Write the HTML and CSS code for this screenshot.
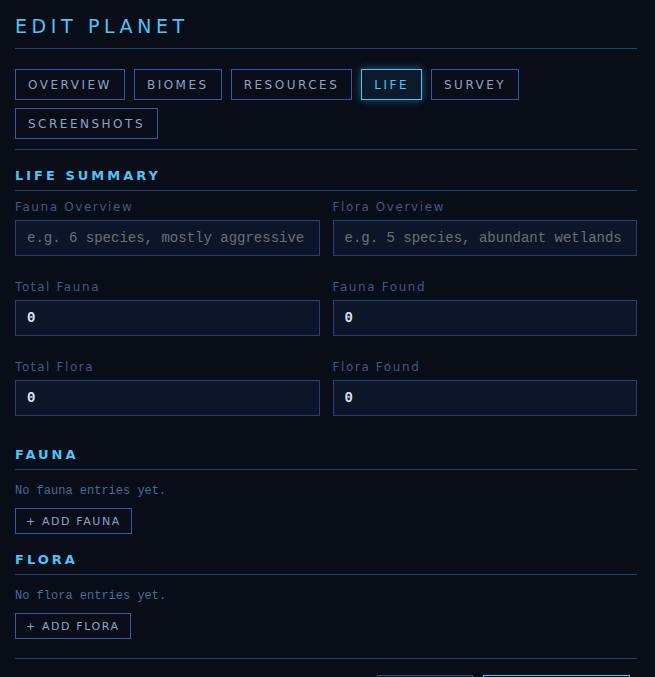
FILE: index.html
```html
<!DOCTYPE html>
<html lang="en">
<head>
    <meta charset="UTF-8">
    <meta name="viewport" content="width=device-width, initial-scale=1.0">
    <title>Edit Planet</title>
    <link rel="stylesheet" href="styles.css">
</head>
<body>

    <div class="panel">
        <h1 class="panel-title">EDIT PLANET</h1>

        <div class="tabs">
            <button class="tab">OVERVIEW</button>
            <button class="tab">BIOMES</button>
            <button class="tab">RESOURCES</button>
            <button class="tab active">LIFE</button>
            <button class="tab">SURVEY</button>
            <button class="tab">SCREENSHOTS</button>
        </div>

        <h2 class="section-title first">LIFE SUMMARY</h2>
        <div class="form-grid">
            <div class="field">
                <label>Fauna Overview</label>
                <input type="text" placeholder="e.g. 6 species, mostly aggressive">
            </div>
            <div class="field">
                <label>Flora Overview</label>
                <input type="text" placeholder="e.g. 5 species, abundant wetlands">
            </div>
            <div class="field">
                <label>Total Fauna</label>
                <input type="text" value="0">
            </div>
            <div class="field">
                <label>Fauna Found</label>
                <input type="text" value="0">
            </div>
            <div class="field">
                <label>Total Flora</label>
                <input type="text" value="0">
            </div>
            <div class="field">
                <label>Flora Found</label>
                <input type="text" value="0">
            </div>
        </div>

        <h2 class="section-title">FAUNA</h2>
        <p class="empty">No fauna entries yet.</p>
        <button class="add-button">+ ADD FAUNA</button>

        <h2 class="section-title small-gap">FLORA</h2>
        <p class="empty">No flora entries yet.</p>
        <button class="add-button">+ ADD FLORA</button>

        <div class="footer">
            <button class="footer-button">CANCEL</button>
            <button class="footer-button primary">SAVE CHANGES</button>
        </div>
    </div>

</body>
</html>
```

FILE: styles.css
```css
body {
    margin: 0;
    padding: 0;
    background-color: #080d18;
    font-family: 'DejaVu Sans', sans-serif;
    overflow: hidden;
}

.panel {
    padding: 14px 18px 0 15px;
}

.panel-title {
    margin: 0;
    font-size: 19px;
    line-height: 24px;
    font-weight: normal;
    letter-spacing: 4.6px;
    color: #4fc3f7;
    padding-bottom: 10px;
    border-bottom: 1px solid #263f6e;
}

.tabs {
    display: flex;
    flex-wrap: wrap;
    gap: 8px 9px;
    margin-top: 20px;
    padding-bottom: 10px;
    border-bottom: 1px solid #263f6e;
}

.tab {
    height: 31px;
    padding: 0 12px;
    background-color: #080d18;
    border: 1px solid #2f5aa8;
    color: #8aa4c8;
    font-family: 'DejaVu Sans', sans-serif;
    font-size: 12px;
    letter-spacing: 2.5px;
    cursor: pointer;
}

.tab.active {
    border-color: #4fc3f7;
    color: #4fc3f7;
    background-color: #0d1a2c;
    box-shadow: 0 0 8px rgba(79, 195, 247, 0.45);
}

.section-title {
    margin: 31px 0 0 0;
    font-size: 13px;
    line-height: 16px;
    font-weight: bold;
    letter-spacing: 3px;
    color: #4fc3f7;
    padding-bottom: 6px;
    border-bottom: 1px solid #263f6e;
}

.section-title.first {
    margin-top: 18px;
}

.section-title.small-gap {
    margin-top: 18px;
}

.form-grid {
    display: grid;
    grid-template-columns: 1fr 1fr;
    gap: 24px 13px;
    margin-top: 9px;
}

.field {
    display: flex;
    flex-direction: column;
}

.field label {
    font-size: 12px;
    line-height: 14px;
    letter-spacing: 1.6px;
    color: #3d5a85;
    margin-bottom: 6px;
}

.field input {
    height: 36px;
    box-sizing: border-box;
    padding: 0 11px;
    background-color: #0d1628;
    border: 1px solid #22407a;
    color: #d8e4f5;
    font-family: 'Liberation Mono', monospace;
    font-size: 14px;
    font-weight: bold;
    outline: none;
}

.field input::placeholder {
    color: #6b6f78;
    font-weight: normal;
}

.empty {
    margin: 13px 0 0 0;
    font-family: 'Liberation Mono', monospace;
    font-size: 12px;
    line-height: 16px;
    color: #4a6a99;
}

.add-button {
    margin-top: 9px;
    height: 26px;
    padding: 0 10px;
    background-color: #080d18;
    border: 1px solid #2f5aa8;
    color: #8aa4c8;
    font-family: 'DejaVu Sans', sans-serif;
    font-size: 11px;
    letter-spacing: 1.6px;
    cursor: pointer;
}

.footer {
    display: flex;
    justify-content: flex-end;
    gap: 10px;
    margin-top: 19px;
    padding-top: 16px;
    padding-right: 7px;
    border-top: 1px solid #263f6e;
}

.footer-button {
    height: 30px;
    padding: 0 20px;
    background-color: #080d18;
    border: 1px solid #3a4f86;
    color: #8aa4c8;
    font-family: 'DejaVu Sans', sans-serif;
    font-size: 11px;
    letter-spacing: 1.6px;
}

.footer-button.primary {
    border-color: #4fc3f7;
    color: #4fc3f7;
}
```
